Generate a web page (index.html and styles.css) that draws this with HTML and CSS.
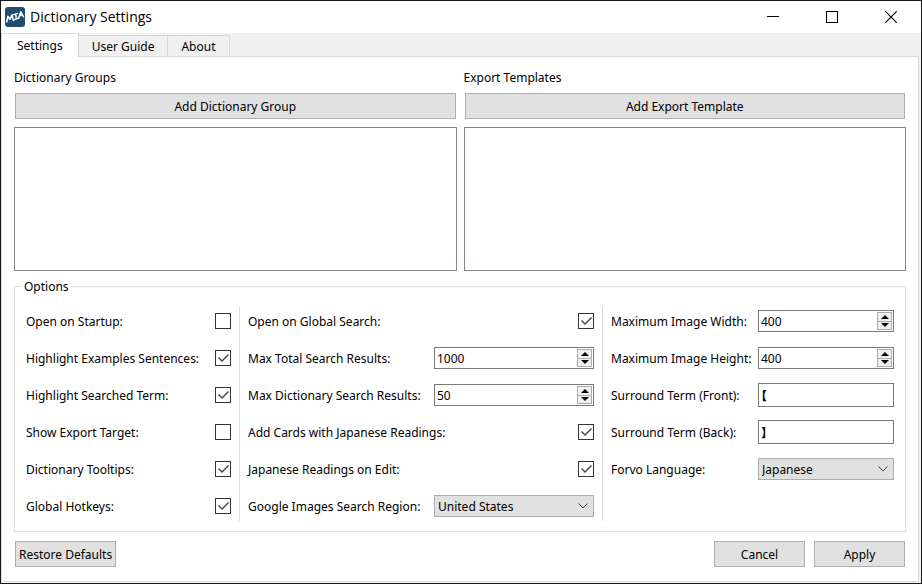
FILE: index.html
```html
<!DOCTYPE html>
<html lang="en">
<head>
<meta charset="utf-8">
<title>Dictionary Settings</title>
<link rel="stylesheet" href="styles.css">
</head>
<body>
<div class="window">
  <header class="titlebar">
    <svg class="logo" width="20" height="20" viewBox="0 0 20 20" aria-hidden="true">
      <rect width="20" height="20" rx="3" fill="#1f4e70"/>
      <g fill="none" stroke="#fff" stroke-width="1.5" stroke-linecap="round" stroke-linejoin="round">
        <path d="M1.7 15 2.8 9.3 5 12.3 7 7.8 8.4 13.4"/>
        <path d="M8.8 7.6 12.4 6.4M10.7 7 11.3 12M9.6 12.6 13 11.4"/>
        <path d="M13.6 11.2 15.8 4.8 18.4 9.6M14.6 8.8 17.4 7.8"/>
      </g>
    </svg>
    <h1 class="title">Dictionary Settings</h1>
    <div class="window-buttons">
      <button class="window-button" type="button" aria-label="Minimize"><svg width="12" height="12" viewBox="0 0 12 12" shape-rendering="crispEdges"><path d="M0 5.5H12" stroke="#000"/></svg></button>
      <button class="window-button" type="button" aria-label="Maximize"><svg width="12" height="12" viewBox="0 0 12 12" shape-rendering="crispEdges"><rect x=".5" y=".5" width="11" height="11" fill="none" stroke="#000"/></svg></button>
      <button class="window-button" type="button" aria-label="Close"><svg width="12" height="12" viewBox="0 0 12 12"><path d="M.3.3 11.7 11.7M11.7.3.3 11.7" stroke="#000" stroke-width="1.1"/></svg></button>
    </div>
  </header>

  <nav class="tabs" role="tablist">
    <button class="tab tab-active" type="button" role="tab" aria-selected="true">Settings</button>
    <button class="tab" type="button" role="tab" aria-selected="false">User Guide</button>
    <button class="tab" type="button" role="tab" aria-selected="false">About</button>
  </nav>

  <main class="page">
    <div class="lists">
      <section class="list-group">
        <h2 class="heading">Dictionary Groups</h2>
        <button class="button button-wide" type="button">Add Dictionary Group</button>
        <div class="list"></div>
      </section>
      <section class="list-group">
        <h2 class="heading">Export Templates</h2>
        <button class="button button-wide" type="button">Add Export Template</button>
        <div class="list"></div>
      </section>
    </div>

    <fieldset class="options">
      <legend class="legend">Options</legend>
      <div class="columns">
        <div class="column">
          <div class="row"><label for="startup">Open on Startup:</label><input class="check" type="checkbox" id="startup"></div>
          <div class="row"><label for="examples">Highlight Examples Sentences:</label><input class="check" type="checkbox" id="examples" checked></div>
          <div class="row"><label for="searched">Highlight Searched Term:</label><input class="check" type="checkbox" id="searched" checked></div>
          <div class="row"><label for="target">Show Export Target:</label><input class="check" type="checkbox" id="target"></div>
          <div class="row"><label for="tooltips">Dictionary Tooltips:</label><input class="check" type="checkbox" id="tooltips" checked></div>
          <div class="row"><label for="hotkeys">Global Hotkeys:</label><input class="check" type="checkbox" id="hotkeys" checked></div>
        </div>

        <div class="column">
          <div class="row"><label for="global">Open on Global Search:</label><input class="check" type="checkbox" id="global" checked></div>
          <div class="row"><label for="total">Max Total Search Results:</label>
            <div class="spin"><input class="spin-input" type="number" id="total" value="1000">
              <div class="steps"><button class="step" type="button" aria-label="Increase"><svg width="8" height="4" viewBox="0 0 8 4"><path d="M0 4 4 0 8 4Z"/></svg></button><button class="step" type="button" aria-label="Decrease"><svg width="8" height="4" viewBox="0 0 8 4"><path d="M0 0 4 4 8 0Z"/></svg></button></div>
            </div></div>
          <div class="row"><label for="perdict">Max Dictionary Search Results:</label>
            <div class="spin"><input class="spin-input" type="number" id="perdict" value="50">
              <div class="steps"><button class="step" type="button" aria-label="Increase"><svg width="8" height="4" viewBox="0 0 8 4"><path d="M0 4 4 0 8 4Z"/></svg></button><button class="step" type="button" aria-label="Decrease"><svg width="8" height="4" viewBox="0 0 8 4"><path d="M0 0 4 4 8 0Z"/></svg></button></div>
            </div></div>
          <div class="row"><label for="readings">Add Cards with Japanese Readings:</label><input class="check" type="checkbox" id="readings" checked></div>
          <div class="row"><label for="onedit">Japanese Readings on Edit:</label><input class="check" type="checkbox" id="onedit" checked></div>
          <div class="row"><label for="region">Google Images Search Region:</label>
            <div class="combo"><select class="select" id="region"><option>United States</option></select>
              <svg class="chevron" width="10" height="6" viewBox="0 0 10 6"><path d="M.5.5 5 5 9.5.5" fill="none" stroke="#444"/></svg></div></div>
        </div>

        <div class="column column-narrow">
          <div class="row"><label for="width">Maximum Image Width:</label>
            <div class="spin"><input class="spin-input" type="number" id="width" value="400">
              <div class="steps"><button class="step" type="button" aria-label="Increase"><svg width="8" height="4" viewBox="0 0 8 4"><path d="M0 4 4 0 8 4Z"/></svg></button><button class="step" type="button" aria-label="Decrease"><svg width="8" height="4" viewBox="0 0 8 4"><path d="M0 0 4 4 8 0Z"/></svg></button></div>
            </div></div>
          <div class="row"><label for="height">Maximum Image Height:</label>
            <div class="spin"><input class="spin-input" type="number" id="height" value="400">
              <div class="steps"><button class="step" type="button" aria-label="Increase"><svg width="8" height="4" viewBox="0 0 8 4"><path d="M0 4 4 0 8 4Z"/></svg></button><button class="step" type="button" aria-label="Decrease"><svg width="8" height="4" viewBox="0 0 8 4"><path d="M0 0 4 4 8 0Z"/></svg></button></div>
            </div></div>
          <div class="row"><label for="front">Surround Term (Front):</label><input class="text" type="text" id="front" value="【"></div>
          <div class="row"><label for="back">Surround Term (Back):</label><input class="text" type="text" id="back" value="】"></div>
          <div class="row"><label for="forvo">Forvo Language:</label>
            <div class="combo"><select class="select" id="forvo"><option>Japanese</option></select>
              <svg class="chevron" width="10" height="6" viewBox="0 0 10 6"><path d="M.5.5 5 5 9.5.5" fill="none" stroke="#444"/></svg></div></div>
        </div>
      </div>
    </fieldset>

    <footer class="actions">
      <button class="button button-fit" type="button">Restore Defaults</button>
      <button class="button button-action button-first" type="button">Cancel</button>
      <button class="button button-action" type="button">Apply</button>
    </footer>
  </main>
</div>
</body>
</html>
```

FILE: styles.css
```css
*, *::before {
  box-sizing: border-box;
}

body {
  margin: 0;
  color: #000;
  background: #f0f0f0;
}

body, button, input, select {
  font-family: "Noto Sans", "Noto Sans CJK JP", sans-serif;
  font-size: 12px;
  line-height: 16px;
}

button, input, select {
  margin: 0;
  padding: 0;
  color: inherit;
  border-radius: 0;
}

svg {
  display: block;
}

label {
  padding-top: 2px;
}

.window {
  display: flex;
  flex-direction: column;
  min-height: 100vh;
  border: 1px solid #18181a;
}

/* Title bar */
.titlebar {
  display: flex;
  align-items: center;
  height: 32px;
  padding-left: 4px;
  background: #fff;
}

.title {
  margin: 0 0 0 5px;
  font-family: "Open Sans", sans-serif;
  font-size: 14px;
  font-weight: 400;
  line-height: 20px;
}

.window-buttons {
  display: flex;
  margin-left: auto;
  gap: 12px;
  padding-right: 7px;
}

.window-button {
  display: grid;
  place-items: center;
  width: 47px;
  height: 32px;
  border: 0;
  background: none;
}

/* Tabs */
.tabs {
  display: flex;
  align-items: flex-end;
  height: 24px;
}

.tab {
  height: 22px;
  margin-left: -1px;
  padding: 2px 13px 0;
  border: 1px solid #d9d9d9;
  background: #f0f0f0;
}

.tab-active {
  z-index: 1;
  height: 24px;
  margin-left: 0;
  padding: 0 15px;
  border-bottom: 0;
  background: #fff;
}

/* Page */
.page {
  display: flex;
  flex: 1;
  flex-direction: column;
  margin: -1px 2px 1px 0;
  padding: 12px 12px 14px;
  border: 1px solid #dcdcdc;
  background: #fff;
}

.lists {
  display: flex;
  flex: 1;
  gap: 7px;
}

.list-group {
  display: flex;
  flex: 1;
  flex-direction: column;
}

.heading {
  margin: 0;
  padding-top: 1px;
  font-size: 12px;
  font-weight: 400;
  line-height: 16px;
}

.button {
  height: 26px;
  padding-top: 2px;
  border: 1px solid #adadad;
  background: #e1e1e1;
}

.button-wide {
  margin: 7px 1px 8px;
}

.list {
  flex: 1;
  min-height: 100px;
  border: 1px solid #828790;
}

/* Options */
.options {
  min-width: 0;
  margin: 6px 0 0;
  padding: 11px 11px 10px;
  border: 1px solid #dcdcdc;
}

.legend {
  margin-left: -4px;
  padding: 2px 2px 0;
}

.columns {
  display: grid;
  grid-template-columns: 214fr 363fr 291fr;
}

.column {
  display: flex;
  flex-direction: column;
  gap: 13px;
  padding: 3px 8px;
  border-right: 1px solid #d5dfe5;
}

.column:first-child {
  padding-left: 0;
}

.column:last-child {
  padding-right: 0;
  border-right: 0;
}

.row {
  display: flex;
  align-items: center;
  justify-content: space-between;
  height: 24px;
  white-space: nowrap;
}

.check {
  appearance: none;
  width: 16px;
  height: 16px;
  border: 1px solid #333;
  background: #fff;
}

.check:checked::before {
  content: "";
  display: block;
  width: 14px;
  height: 14px;
  background: #444;
  clip-path: polygon(2px 7px, 3px 6px, 6px 9px, 12px 3px, 13px 4px, 6px 11px);
}

.spin, .combo, .text {
  width: 160px;
}

.column-narrow .spin, .column-narrow .combo, .column-narrow .text {
  width: 136px;
}

.spin {
  display: flex;
  height: 22px;
  padding: 1px;
  border: 1px solid #7a7a7a;
  background: #fff;
}

.spin-input {
  flex: 1;
  min-width: 0;
  padding: 2px 0 0 1px;
  border: 0;
  appearance: textfield;
  background: none;
}

.spin-input::-webkit-inner-spin-button {
  appearance: none;
}

.steps {
  display: flex;
  flex-direction: column;
  width: 15px;
}

.step {
  display: grid;
  flex: 1;
  place-items: center;
  border: 1px solid #adadad;
  background: #f0f0f0;
}

.step + .step {
  margin-top: -1px;
}

.text {
  height: 24px;
  padding-left: 2px;
  border: 1px solid #7a7a7a;
  background: #fff;
  font-family: "Noto Sans CJK JP", sans-serif;
  font-weight: 700;
  font-feature-settings: "halt";
}

.combo {
  position: relative;
}

.select {
  display: block;
  appearance: none;
  width: 100%;
  height: 22px;
  padding: 2px 20px 0 3px;
  border: 1px solid #adadad;
  background: #e1e1e1;
}

.chevron {
  position: absolute;
  top: 8px;
  right: 6px;
  pointer-events: none;
}

/* Footer */
.actions {
  display: flex;
  gap: 9px;
  margin-top: 9px;
  padding: 0 1px;
}

.button-fit {
  padding-right: 3px;
  padding-left: 3px;
}

.button-action {
  width: 91px;
}

.button-first {
  margin-left: auto;
}
```
